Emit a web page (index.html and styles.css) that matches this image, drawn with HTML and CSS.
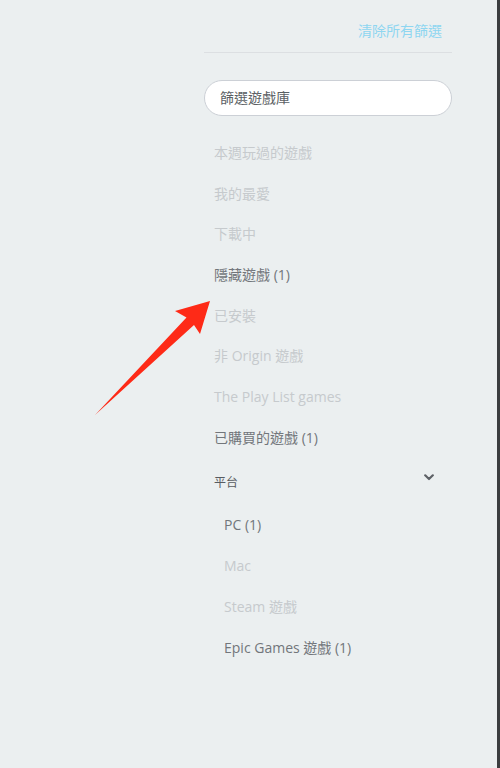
FILE: index.html
```html
<!DOCTYPE html>
<html lang="zh-Hant">
<head>
<meta charset="utf-8">
<title>篩選遊戲庫</title>
<link rel="stylesheet" href="styles.css">
</head>
<body>
<div class="frame">
  <aside class="panel">
    <div class="clear-row"><a class="clear">清除所有篩選</a></div>
    <div class="divider"></div>
    <div class="search">篩選遊戲庫</div>
    <ul class="filters">
      <li class="item off">本週玩過的遊戲</li>
      <li class="item off">我的最愛</li>
      <li class="item off">下載中</li>
      <li class="item on">隱藏遊戲 (1)</li>
      <li class="item off">已安裝</li>
      <li class="item off">非 Origin 遊戲</li>
      <li class="item off">The Play List games</li>
      <li class="item on">已購買的遊戲 (1)</li>
    </ul>
    <div class="group-head">
      <span class="group-title">平台</span>
      <svg class="chev" width="10" height="7" viewBox="0 0 10 7"><path d="M1.2 1.3 L5 5 L8.8 1.3" fill="none" stroke="#5d6166" stroke-width="2.2" stroke-linecap="round" stroke-linejoin="round"/></svg>
    </div>
    <ul class="filters sub">
      <li class="item on">PC (1)</li>
      <li class="item off">Mac</li>
      <li class="item off">Steam 遊戲</li>
      <li class="item on">Epic Games 遊戲 (1)</li>
    </ul>
  </aside>
  <svg class="arrow" width="500" height="768" viewBox="0 0 500 768">
    <polygon points="210,301 175,311 186.5,317.5 95,415 194,325 200,334" fill="#fe2a17"/>
  </svg>
</div>
</body>
</html>
```
FILE: styles.css
```css
* { box-sizing: border-box; }
html, body { margin: 0; padding: 0; }
body {
  background: #ebeff0;
  font-family: "Open Sans", "Noto Sans CJK TC", "Noto Sans", sans-serif;
  width: 500px;
  height: 768px;
  overflow: hidden;
}
.frame {
  position: relative;
  width: 500px;
  height: 768px;
  border-right: 3px solid #3b3d3f;
  background: #ebeff0;
}
.panel {
  margin-left: 204px;
  width: 248px;
  padding-top: 20px;
}
.clear-row {
  display: flex;
  justify-content: flex-end;
  padding-right: 10px;
  height: 21px;
}
.clear {
  font-size: 14px;
  line-height: 21px;
  color: #8ed6f1;
}
.divider {
  margin-top: 11px;
  height: 1px;
  background: #dcdfe2;
}
.search {
  margin-top: 27px;
  height: 36px;
  border: 1px solid #ccd0d6;
  border-radius: 18px;
  background: #fff;
  padding-left: 15px;
  font-size: 14px;
  line-height: 34px;
  color: #5b5f64;
}
.filters {
  list-style: none;
  margin: 17px 0 0;
  padding: 0 0 0 10px;
}
.item {
  height: 40.7px;
  line-height: 40.7px;
  font-size: 14px;
  white-space: nowrap;
}
.item.off { color: #c6cacd; }
.item.on { color: #72767b; }
.group-head {
  margin-top: 3px;
  height: 41px;
  display: flex;
  align-items: center;
  justify-content: space-between;
  padding-left: 10px;
  padding-right: 18px;
}
.group-title {
  font-size: 12px;
  color: #585c61;
}
.chev {
  margin-top: -9px;
}
.filters.sub {
  margin-top: 1px;
  padding-left: 20px;
}
.filters.sub .item { height: 41px; line-height: 41px; }
.arrow {
  position: absolute;
  left: 0;
  top: 0;
  pointer-events: none;
}
```
